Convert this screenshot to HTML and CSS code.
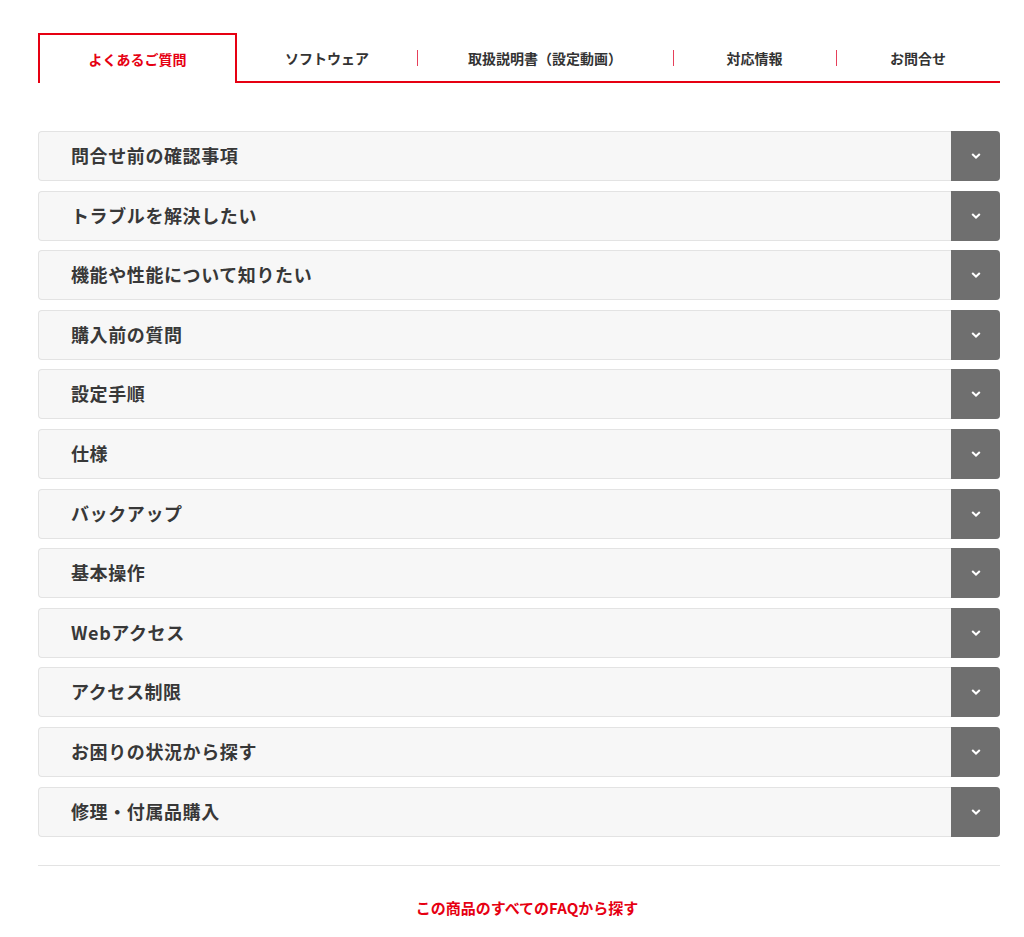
FILE: index.html
```html
<!DOCTYPE html>
<html lang="ja">
<head>
<meta charset="utf-8">
<title>よくあるご質問</title>
<link rel="stylesheet" href="styles.css">
</head>
<body>
<div class="page">
  <nav class="tabs">
    <a class="tab active">よくあるご質問</a>
    <a class="tab">ソフトウェア</a>
    <a class="tab sep">取扱説明書（設定動画）</a>
    <a class="tab sep">対応情報</a>
    <a class="tab sep">お問合せ</a>
  </nav>

  <div class="faq">
    <div class="item"><span class="label">問合せ前の確認事項</span><span class="toggle"><svg viewBox="0 0 10 6" width="10" height="6"><path d="M1.2 1 L5 4.6 L8.8 1" fill="none" stroke="#fff" stroke-width="2"/></svg></span></div>
    <div class="item"><span class="label">トラブルを解決したい</span><span class="toggle"><svg viewBox="0 0 10 6" width="10" height="6"><path d="M1.2 1 L5 4.6 L8.8 1" fill="none" stroke="#fff" stroke-width="2"/></svg></span></div>
    <div class="item"><span class="label">機能や性能について知りたい</span><span class="toggle"><svg viewBox="0 0 10 6" width="10" height="6"><path d="M1.2 1 L5 4.6 L8.8 1" fill="none" stroke="#fff" stroke-width="2"/></svg></span></div>
    <div class="item"><span class="label">購入前の質問</span><span class="toggle"><svg viewBox="0 0 10 6" width="10" height="6"><path d="M1.2 1 L5 4.6 L8.8 1" fill="none" stroke="#fff" stroke-width="2"/></svg></span></div>
    <div class="item"><span class="label">設定手順</span><span class="toggle"><svg viewBox="0 0 10 6" width="10" height="6"><path d="M1.2 1 L5 4.6 L8.8 1" fill="none" stroke="#fff" stroke-width="2"/></svg></span></div>
    <div class="item"><span class="label">仕様</span><span class="toggle"><svg viewBox="0 0 10 6" width="10" height="6"><path d="M1.2 1 L5 4.6 L8.8 1" fill="none" stroke="#fff" stroke-width="2"/></svg></span></div>
    <div class="item"><span class="label">バックアップ</span><span class="toggle"><svg viewBox="0 0 10 6" width="10" height="6"><path d="M1.2 1 L5 4.6 L8.8 1" fill="none" stroke="#fff" stroke-width="2"/></svg></span></div>
    <div class="item"><span class="label">基本操作</span><span class="toggle"><svg viewBox="0 0 10 6" width="10" height="6"><path d="M1.2 1 L5 4.6 L8.8 1" fill="none" stroke="#fff" stroke-width="2"/></svg></span></div>
    <div class="item"><span class="label">Webアクセス</span><span class="toggle"><svg viewBox="0 0 10 6" width="10" height="6"><path d="M1.2 1 L5 4.6 L8.8 1" fill="none" stroke="#fff" stroke-width="2"/></svg></span></div>
    <div class="item"><span class="label">アクセス制限</span><span class="toggle"><svg viewBox="0 0 10 6" width="10" height="6"><path d="M1.2 1 L5 4.6 L8.8 1" fill="none" stroke="#fff" stroke-width="2"/></svg></span></div>
    <div class="item"><span class="label">お困りの状況から探す</span><span class="toggle"><svg viewBox="0 0 10 6" width="10" height="6"><path d="M1.2 1 L5 4.6 L8.8 1" fill="none" stroke="#fff" stroke-width="2"/></svg></span></div>
    <div class="item"><span class="label">修理・付属品購入</span><span class="toggle"><svg viewBox="0 0 10 6" width="10" height="6"><path d="M1.2 1 L5 4.6 L8.8 1" fill="none" stroke="#fff" stroke-width="2"/></svg></span></div>
  </div>

  <div class="footer">
    <a class="all-link">この商品のすべてのFAQから探す</a>
  </div>
</div>
</body>
</html>
```

FILE: styles.css
```css
html, body {
  margin: 0;
  padding: 0;
  background: #fff;
}
body {
  font-family: "Noto Sans CJK JP", "Noto Sans", sans-serif;
  color: #333;
}
.page {
  width: 962px;
  margin-left: 38px;
  padding-top: 33px;
}
.tabs {
  display: flex;
  border-bottom: 2px solid #e60012;
  height: 48px;
}
.tab {
  flex: 1 1 auto;
  display: flex;
  align-items: center;
  justify-content: center;
  font-size: 14px;
  font-weight: bold;
  color: #333;
  position: relative;
  box-sizing: border-box;
  padding-top: 2px;
}
.tab.active {
  flex: 0 0 199px;
  color: #e60012;
  border: 2px solid #e60012;
  border-bottom: none;
  background: #fff;
  height: 50px;
  margin-bottom: -2px;
  padding-top: 0;
}
.tab:nth-child(2) { flex: 0 0 180px; }
.tab:nth-child(3) { flex: 0 0 256px; }
.tab:nth-child(4) { flex: 0 0 163px; }
.tab:nth-child(5) { flex: 0 0 164px; }
.tab.sep::before {
  content: "";
  position: absolute;
  left: 0;
  top: 17px;
  width: 1px;
  height: 16px;
  background: #e6405a;
}
.faq {
  margin-top: 48px;
  display: flex;
  flex-direction: column;
  gap: 9.6px;
}
.item {
  display: flex;
  align-items: stretch;
  height: 50px;
  box-sizing: border-box;
  background: #f7f7f7;
  border: 1px solid #e3e3e3;
  border-right: none;
  border-radius: 4px;
}
.label {
  flex: 1;
  display: flex;
  align-items: center;
  padding-left: 32px;
  padding-bottom: 2px;
  font-size: 18px;
  font-weight: bold;
  letter-spacing: 0.6px;
  color: #383838;
}
.toggle {
  flex: 0 0 49px;
  margin: -1px 0;
  background: #6f6f6f;
  border-radius: 0 4px 4px 0;
  display: flex;
  align-items: center;
  justify-content: center;
}
.footer {
  margin-top: 28px;
  border-top: 1px solid #e3e3e3;
  text-align: center;
  padding: 29px 0 0 16px;
}
.all-link {
  font-size: 15px;
  font-weight: bold;
  color: #e60012;
}
```
